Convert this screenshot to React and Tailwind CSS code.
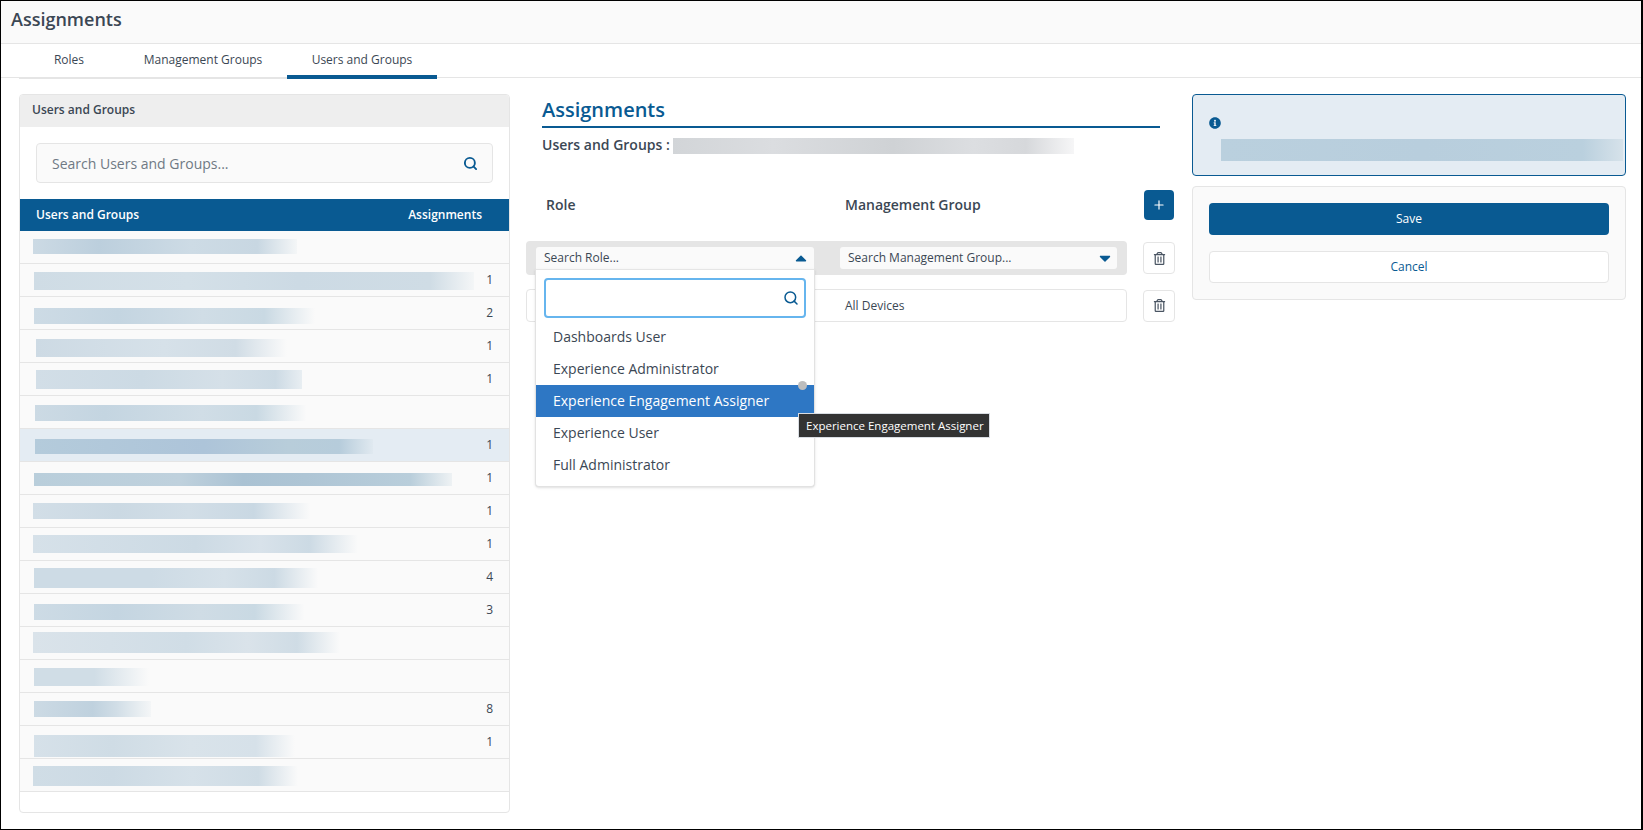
import React from "react";
import { Plus, Search } from "lucide-react";
import { FaCaretDown, FaCaretUp, FaInfoCircle, FaRegTrashAlt } from "react-icons/fa";

const rows = [
  { bar: "ml-[13px] mt-[8px] w-[264px] h-[15px] bg-[linear-gradient(90deg,#ccdae4_0%,#bccfdd_25%,#cddbe5_60%,#c8d7e2_85%,#f4f6f7_100%)]" },
  { num: 1, bar: "ml-[14px] mt-[8px] w-[440px] h-[18px] bg-[linear-gradient(90deg,#cfdce5_0%,#d4e0e8_35%,#ccdae4_60%,#cfdce5_90%,#f4f6f7_100%)]" },
  { num: 2, bar: "ml-[14px] mt-[11px] w-[281px] h-[16px] bg-[linear-gradient(90deg,#cddbe5_0%,#c4d5e1_30%,#d0dde6_60%,#c9d9e3_82%,#fafafa_100%)]" },
  { num: 1, bar: "ml-[16px] mt-[9px] w-[256px] h-[18px] bg-[linear-gradient(90deg,#cddae4_0%,#d6e1e9_50%,#d0dce5_78%,#fafafa_98%)]" },
  { num: 1, bar: "ml-[16px] mt-[7px] w-[266px] h-[19px] bg-[linear-gradient(90deg,#d2dee7_0%,#ccdae4_40%,#d5e0e8_70%,#ccdae4_90%,#e8eef2_100%)]" },
  { bar: "ml-[15px] mt-[9px] w-[277px] h-[16px] bg-[linear-gradient(90deg,#ccdae4_0%,#c4d5e1_25%,#d0dde6_60%,#c9d9e3_80%,#fafafa_98%)]" },
  { num: 1, active: true, bar: "ml-[15px] mt-[10px] w-[338px] h-[15px] bg-[linear-gradient(90deg,#b4cbdb_0%,#adc4d9_50%,#b8cdda_75%,#b6ccdb_90%,#e0e9f0_100%)]" },
  { num: 1, bar: "ml-[14px] mt-[11px] w-[418px] h-[13px] bg-[linear-gradient(90deg,#b9cedb_0%,#bfd1dd_35%,#aac2d3_50%,#aec5d5_65%,#b9cedb_90%,#eef2f4_100%)]" },
  { num: 1, bar: "ml-[13px] mt-[8px] w-[283px] h-[16px] bg-[linear-gradient(90deg,#d2dee7_0%,#cbd9e3_30%,#d2dee7_55%,#c9d8e3_78%,#fafafa_98%)]" },
  { num: 1, bar: "ml-[13px] mt-[7px] w-[325px] h-[18px] bg-[linear-gradient(90deg,#d6e1e9_0%,#ccdae4_50%,#d8e2ea_70%,#ccdae4_85%,#fafafa_100%)]" },
  { num: 4, bar: "ml-[14px] mt-[7px] w-[293px] h-[20px] bg-[linear-gradient(90deg,#cddbe5_0%,#cddbe5_40%,#d6e1e9_65%,#ccdae4_82%,#fafafa_97%)]" },
  { num: 3, bar: "ml-[14px] mt-[10px] w-[276px] h-[16px] bg-[linear-gradient(90deg,#cddbe5_0%,#c4d5e1_30%,#cfdce5_60%,#c9d9e3_80%,#fafafa_98%)]" },
  { bar: "ml-[13px] mt-[5px] w-[307px] h-[21px] bg-[linear-gradient(90deg,#dae3ea_0%,#d0dde6_50%,#dae3ea_70%,#cfdce5_86%,#fafafa_100%)]" },
  { bar: "ml-[14px] mt-[8px] w-[121px] h-[18px] bg-[linear-gradient(90deg,#d0dde6_0%,#d0dde6_50%,#fafafa_95%)]" },
  { num: 8, bar: "ml-[14px] mt-[8px] w-[117px] h-[16px] bg-[linear-gradient(90deg,#ccdae4_0%,#bfd1de_50%,#d0dde6_70%,#f4f6f7_100%)]" },
  { num: 1, bar: "ml-[14px] mt-[9px] w-[261px] h-[22px] bg-[linear-gradient(90deg,#d6e1e9_0%,#cfdce5_30%,#d9e3ea_60%,#d6e1e9_85%,#fafafa_100%)]" },
  { bar: "ml-[13px] mt-[7px] w-[265px] h-[20px] bg-[linear-gradient(90deg,#d0dde6_0%,#ccdae4_30%,#d6e1e9_60%,#cfdce5_85%,#fafafa_100%)]" },
];

const roles = ["Dashboards User", "Experience Administrator", "Experience Engagement Assigner", "Experience User", "Full Administrator"];

const TrashButton = () => (
  <button className="flex h-[32px] w-[32px] items-center justify-center rounded-[4px] border border-[#e5e5e5] bg-white text-[#4a5563]">
    <FaRegTrashAlt size={13} />
  </button>
);

const App = () => {
  return (
    <div className="flex h-[830px] w-[1643px] flex-col overflow-hidden border border-r-2 border-black bg-white font-['Open_Sans',sans-serif] text-[#3b4754]">
      <header className="flex h-[43px] shrink-0 items-center border-b border-[#e5e5e5] bg-[#fafafa] pb-[5px] pl-[10px]">
        <h1 className="text-[18px] font-semibold">Assignments</h1>
      </header>

      <div className="h-[34px] shrink-0 border-b border-[#e5e5e5]">
        <nav className="ml-[18px] flex h-[35px] w-[418px] items-start border-b-2 border-[#e5e5e5] text-[12px]">
          <button className="flex h-[32px] w-[100px] items-center justify-center">Roles</button>
          <button className="flex h-[32px] w-[168px] items-center justify-center">Management Groups</button>
          <button className="flex h-[35px] w-[150px] items-center justify-center border-b-4 border-[#095a92]">Users and Groups</button>
        </nav>
      </div>

      <main className="flex flex-1 items-start pl-[18px] pt-[16px]">
        <section className="h-[719px] w-[491px] shrink-0 overflow-hidden rounded-[4px] border border-[#e5e5e5]">
          <div className="flex h-[32px] items-center bg-[#eeeeee] pb-[2px] pl-[12px] text-[12px] font-semibold">Users and Groups</div>
          <div className="px-[16px] py-[16px]">
            <div className="flex h-[40px] items-center justify-between rounded-[4px] border border-[#e5e5e5] bg-[#fafafa] pl-[15px] pr-[14px]">
              <span className="text-[14px] text-[#6f7984]">Search Users and Groups...</span>
              <Search size={15} strokeWidth={3} className="text-[#095a92]" />
            </div>
          </div>
          <div className="flex h-[32px] items-center justify-between bg-[#095a92] pl-[16px] pr-[27px] text-[12px] font-semibold text-white">
            <span>Users and Groups</span>
            <span>Assignments</span>
          </div>
          {rows.map((row, i) => (
            <div key={i} className={`flex h-[33px] items-start justify-between border-b border-[#e5e5e5] pr-[16px] ${row.active ? "bg-[#e4ecf3]" : "bg-[#fafafa]"}`}>
              <div className={row.bar} />
              {row.num && <span className="self-center text-[12px]">{row.num}</span>}
            </div>
          ))}
        </section>

        <section className="ml-[16px] w-[649px] shrink-0">
          <div className="ml-[16px] w-[618px]">
            <h2 className="h-[34px] border-b-2 border-[#095a92] text-[20px] font-semibold leading-[32px] text-[#095a92]">Assignments</h2>
            <div className="mt-[10px] flex h-[16px] items-center">
              <span className="w-[131px] shrink-0 pb-[4px] text-[14px] font-semibold">Users and Groups :</span>
              <div className="h-[16px] w-[401px] bg-[linear-gradient(90deg,#d2d5d8_0%,#dbdde0_25%,#cfd2d5_55%,#dcdee1_75%,#d6d8db_88%,#f6f6f7_100%)]" />
            </div>
          </div>

          <div className="mt-[36px] flex h-[30px] items-center justify-between pr-px">
            <div className="flex pb-[2px] text-[14px] font-semibold">
              <span className="w-[319px] pl-[20px]">Role</span>
              <span>Management Group</span>
            </div>
            <button className="flex h-[30px] w-[30px] items-center justify-center rounded-[4px] bg-[#095a92] text-white">
              <Plus size={14} />
            </button>
          </div>

          <div className="mt-[21px] flex items-center justify-between">
            <div className="flex h-[34px] w-[601px] items-center gap-[26px] rounded-[4px] bg-[#e5e5e5] px-[10px]">
              <div className="relative flex h-[22px] w-[278px] items-center justify-between rounded-t-[3px] bg-[#fafafa] pl-[8px] pr-[4px] text-[12px]">
                <span>Search Role...</span>
                <FaCaretUp size={18} className="text-[#095a92]" />

                <div className="absolute left-[-1px] top-[22px] z-10 h-[218px] w-[280px] rounded-b-[4px] border border-t-[#e5e5e5] border-[#e2e2e2] bg-white shadow-sm">
                  <div className="mx-[8px] mt-[8px] flex h-[40px] items-center justify-end rounded-[4px] border-2 border-[#66b5ee] pr-[5px] text-[#095a92]">
                    <Search size={16} strokeWidth={2.25} />
                  </div>
                  <ul className="mt-[3px] text-[14px]">
                    {roles.map((role) => (
                      <li key={role} className={`flex h-[32px] items-center pb-[2px] pl-[17px] ${role === "Experience Engagement Assigner" ? "bg-[#2e77c4] text-white" : ""}`}>
                        {role}
                      </li>
                    ))}
                  </ul>
                  <div className="absolute left-[262px] top-[111px] h-[9px] w-[9px] rounded-full bg-[#bdbdbd]" />
                  <div className="absolute left-[262px] top-[143px] flex h-[25px] w-[192px] items-center whitespace-nowrap border border-[#d9dde3] bg-[#333333] pl-[7px] text-[11.5px] text-white">
                    Experience Engagement Assigner
                  </div>
                </div>
              </div>
              <div className="flex h-[22px] w-[277px] items-center justify-between rounded-[3px] bg-[#fafafa] pl-[8px] pr-[3px] text-[12px]">
                <span>Search Management Group...</span>
                <FaCaretDown size={18} className="text-[#095a92]" />
              </div>
            </div>
            <TrashButton />
          </div>

          <div className="mt-[14px] flex items-center justify-between">
            <div className="flex h-[33px] w-[601px] items-center rounded-[4px] border border-[#e5e5e5] bg-white pl-[318px] text-[12px]">All Devices</div>
            <TrashButton />
          </div>
        </section>

        <aside className="ml-[17px] w-[434px] shrink-0">
          <div className="relative h-[82px] rounded-[4px] border border-[#095a92] bg-[#e4ecf3]">
            <FaInfoCircle size={12} className="absolute left-[16px] top-[22px] text-[#095a92]" />
            <div className="absolute left-[28px] top-[44px] h-[22px] w-[402px] bg-[linear-gradient(90deg,#bad0de_0%,#b8cedd_50%,#bad0de_90%,#d6e2ea_100%)]" />
          </div>
          <div className="mt-[10px] flex h-[114px] flex-col gap-[16px] rounded-[4px] border border-[#e5e5e5] bg-[#fafafa] px-[16px] pt-[16px] text-[12px]">
            <button className="h-[32px] rounded-[4px] bg-[#095a92] text-white">Save</button>
            <button className="h-[32px] rounded-[4px] border border-[#e5e5e5] bg-white text-[#095a92]">Cancel</button>
          </div>
        </aside>
      </main>
    </div>
  );
};

export default App;
